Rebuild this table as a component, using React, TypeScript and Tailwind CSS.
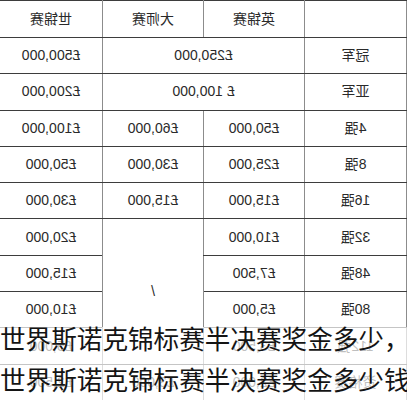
const rows: { label: string; cells: { text: string; span?: number; rowSpan?: number }[]; faint?: boolean }[] = [
  { label: "冠军", cells: [{ text: "£250,000", span: 2 }, { text: "£500,000" }] },
  { label: "亚军", cells: [{ text: "£ 100,000", span: 2 }, { text: "£200,000" }] },
  { label: "4强", cells: [{ text: "£50,000" }, { text: "£60,000" }, { text: "£100,000" }] },
  { label: "8强", cells: [{ text: "£25,000" }, { text: "£30,000" }, { text: "£50,000" }] },
  { label: "16强", cells: [{ text: "£15,000" }, { text: "£15,000" }, { text: "£30,000" }] },
  { label: "32强", cells: [{ text: "£10,000" }, { text: "/", rowSpan: 4 }, { text: "£20,000" }] },
  { label: "48强", cells: [{ text: "£7,500" }, { text: "£15,000" }] },
  { label: "80强", cells: [{ text: "£5,000" }, { text: "£10,000" }] },
  { label: "112强", cells: [{ text: "£3,500" }, { text: "£5,000" }] },
  { label: "资格赛", cells: [{ text: "£2,000" }, { text: "£3,000" }, { text: "£2,500" }] },
];

const cell = "border-y border-y-[#3d3d3d] border-x border-x-[#8c8c8c] text-center align-middle p-0";

export default function App() {
  return (
    <div className="relative w-[407px] h-[400px] overflow-hidden bg-white font-['Liberation_Sans','Noto_Sans_CJK_SC',sans-serif] text-[14px] text-[#2a2a2a]">
      <div className="-scale-x-100">
        <table className="w-[407px] table-fixed border-collapse">
          <colgroup>
            <col className="w-[102px]" />
            <col className="w-[101px]" />
            <col className="w-[101px]" />
            <col className="w-[103px]" />
          </colgroup>
          <thead>
            <tr className="h-[37px]">
              <th className={`${cell} font-normal`}></th>
              <th className={`${cell} font-normal`}>英锦赛</th>
              <th className={`${cell} font-normal`}>大师赛</th>
              <th className={`${cell} font-normal`}>世锦赛</th>
            </tr>
          </thead>
          <tbody>
            {rows.map((row) => (
              <tr key={row.label} className="h-[36.3px]">
                <td className={cell}>{row.label}</td>
                {row.cells.map((c, i) => (
                  <td key={i} colSpan={c.span} rowSpan={c.rowSpan} className={cell}>
                    {c.text}
                  </td>
                ))}
              </tr>
            ))}
          </tbody>
        </table>
      </div>
      <div className="absolute left-0 right-0 top-[327px] bottom-0 bg-white/70" />
      <div className="absolute left-0 right-0 top-[317px] font-['Noto_Sans_CJK_SC',sans-serif] text-[25.6px] leading-[41px] text-[#141414] whitespace-nowrap">
        <p>世界斯诺克锦标赛半决赛奖金多少，</p>
        <p>世界斯诺克锦标赛半决赛奖金多少钱</p>
      </div>
    </div>
  );
}
